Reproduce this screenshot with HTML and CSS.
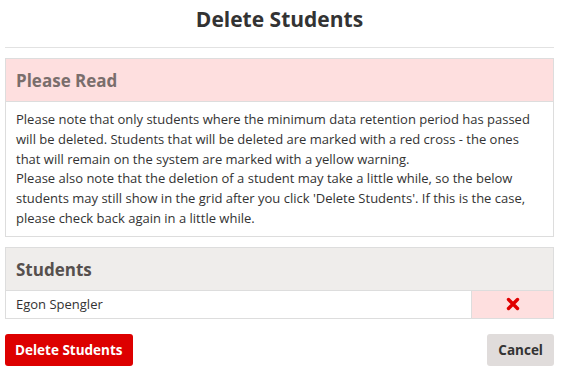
FILE: index.html
```html
<!DOCTYPE html>
<html>
  <head>
    <title>Delete Students</title>
    <link rel="stylesheet" href="styles.css">
  </head>
  <body>
    <div class="modal">
      <h1 class="modal-title">Delete Students</h1>
      <div class="modal-body">
        <div class="panel panel-danger">
          <div class="panel-heading">Please Read</div>
          <div class="panel-body">
            Please note that only students where the minimum data retention period has passed will be deleted. Students that will be deleted are marked with a red cross - the ones that will remain on the system are marked with a yellow warning.<br>
            Please also note that the deletion of a student may take a little while, so the below students may still show in the grid after you click 'Delete Students'. If this is the case, please check back again in a little while.
          </div>
        </div>
        <div class="panel panel-default">
          <div class="panel-heading">Students</div>
          <table class="student-grid">
            <tr>
              <td class="student-name">Egon Spengler</td>
              <td class="student-status delete">
                <svg width="14" height="14" viewBox="0 0 14 14">
                  <path d="M2.5 2.5 L11.5 11.5 M11.5 2.5 L2.5 11.5" stroke="#e00000" stroke-width="3.4" stroke-linecap="round"/>
                </svg>
              </td>
            </tr>
          </table>
        </div>
      </div>
      <div class="modal-footer">
        <button class="btn btn-danger">Delete Students</button>
        <button class="btn btn-default">Cancel</button>
      </div>
    </div>
  </body>
</html>
```

FILE: styles.css
```css
body{
  margin: 0;
  font-family: "Open Sans", sans-serif;
  color: #333;
  background-color: white;
}

.modal{
  width: 549px;
  margin-left: 5px;
}

.modal-title{
  margin: 0;
  height: 47px;
  border-bottom: 1px solid #e2e2e2;
  text-align: center;
  font-size: 21px;
  line-height: 39px;
  font-weight: bold;
  color: #333;
}

.modal-body{
  padding-top: 10px;
}

.panel{
  border: 1px solid #dddddd;
  margin-bottom: 10px;
}

.panel-heading{
  height: 42px;
  line-height: 43px;
  padding: 0 10px;
  font-size: 17px;
  font-weight: bold;
  border-bottom: 1px solid #dddddd;
}

.panel-danger .panel-heading{
  background-color: #fedfdf;
  color: #7a6e6c;
}

.panel-default .panel-heading{
  background-color: #efedeb;
  color: #56504e;
}

.panel-body{
  padding: 8px 18px 7px 10px;
  font-size: 13px;
  line-height: 19.8px;
}

.student-grid{
  width: 100%;
  border-collapse: collapse;
}

.student-grid td{
  height: 27px;
  padding: 0 10px;
  font-size: 13px;
}

.student-status{
  width: 61px;
  border-left: 1px solid #dddddd;
  text-align: center;
}

.student-status svg{
  display: block;
  margin: 0 auto;
}

.student-status.delete{
  background-color: #fedfdf;
}

.modal-footer{
  display: flex;
  justify-content: space-between;
  padding-top: 5px;
}

.btn{
  height: 32px;
  border: none;
  border-radius: 3px;
  padding: 0 10px;
  font-family: "Open Sans", sans-serif;
  font-size: 13.5px;
  font-weight: bold;
}

.btn-danger{
  background-color: #dd0000;
  color: white;
}

.btn-default{
  padding: 0 11px;
  background-color: #e0dcdb;
  color: #333;
}
```
